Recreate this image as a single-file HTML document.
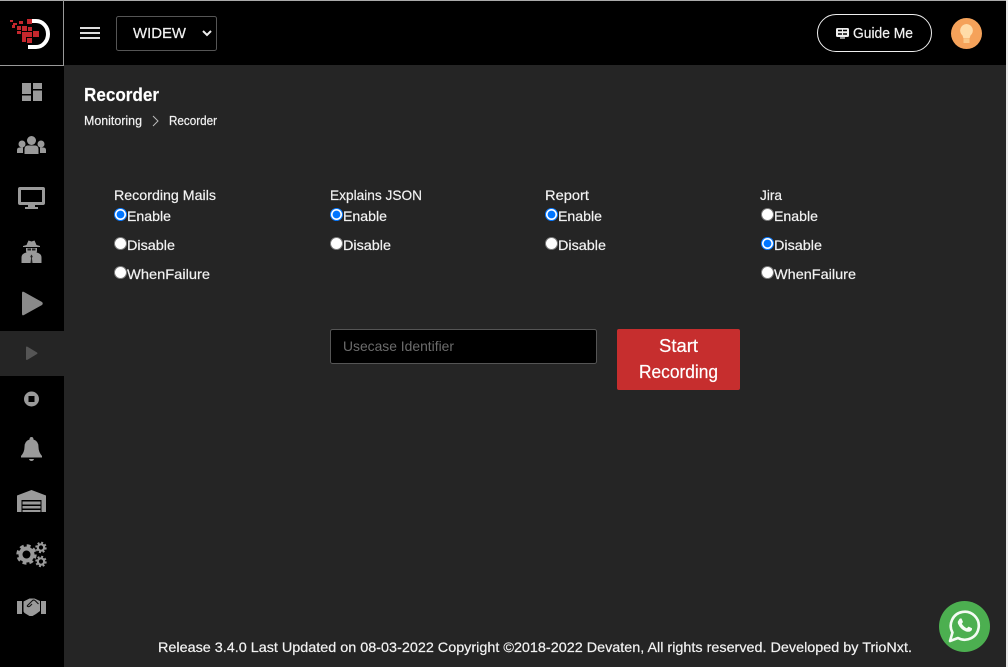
<!DOCTYPE html>
<html><head><meta charset="utf-8"><title>Recorder</title>
<style>
html,body{margin:0;padding:0;background:#252525;width:1008px;height:667px;overflow:hidden}
body{position:relative;font-family:"Liberation Sans",sans-serif}
.a{position:absolute}
input[type=radio]{position:absolute;margin:0;width:13px;height:13px}
svg{position:absolute;left:0;top:0}
text{font-family:"Liberation Sans",sans-serif;fill:#f2f2f2;stroke:#f2f2f2;stroke-width:.2}
</style></head><body>
<div class="a" style="left:0;top:0;width:1008px;height:65px;background:#000"></div>
<div class="a" style="left:0;top:65px;width:64px;height:602px;background:#000"></div>
<div class="a" style="left:0;top:331px;width:64px;height:45px;background:#252525"></div>
<div class="a" style="left:0;top:0;width:1008px;height:1px;background:#aaa"></div>
<div class="a" style="left:63px;top:0;width:1px;height:66px;background:#999"></div>
<div class="a" style="left:0;top:65px;width:64px;height:1px;background:#999"></div>
<div class="a" style="left:1006px;top:0;width:2px;height:667px;background:#e8e8e8"></div>

<svg width="1008" height="667" viewBox="0 0 1008 667">
<!-- logo -->
<path d="M30 21h6a12 13 0 0 1 0 26h-8" fill="none" stroke="#fff" stroke-width="4"/>
<g fill="#c5272d">
<rect x="27" y="19" width="5" height="5"/><rect x="19" y="21" width="4" height="3"/><rect x="13" y="23" width="4" height="2"/><rect x="10" y="20" width="3" height="2"/>
<rect x="12" y="25" width="3" height="3"/><rect x="17" y="26" width="4" height="4"/><rect x="22" y="26" width="5" height="5"/><rect x="28" y="27" width="4" height="4"/>
<rect x="17" y="31" width="4" height="3"/><rect x="22" y="32" width="5" height="5"/><rect x="27" y="32" width="5" height="5"/><rect x="33" y="31" width="6" height="6"/>
<rect x="22" y="37" width="4" height="5"/><rect x="27" y="38" width="5" height="5"/>
</g>
<!-- hamburger -->
<rect x="80" y="27" width="20" height="2" fill="#dcdcdc"/><rect x="80" y="32" width="20" height="2" fill="#dcdcdc"/><rect x="80" y="37" width="20" height="2" fill="#dcdcdc"/>
<!-- select -->
<rect x="116.500" y="16.500" width="100" height="34" rx="2" fill="#000" stroke="#555"/>
<text x="133" y="38" font-size="15" textLength="53" lengthAdjust="spacingAndGlyphs">WIDEW</text>
<path d="M203 31l4 4 4-4" fill="none" stroke="#eee" stroke-width="2"/>
<!-- guide me -->
<rect x="817.500" y="14.500" width="114" height="37" rx="18.500" fill="#000" stroke="#eee"/>
<rect x="836" y="28" width="13" height="9" rx="1.500" fill="#eee"/>
<path d="M838 30.500h4M843 30.500h4M838 34h4M843 34h4" stroke="#000" stroke-width="1.500"/>
<path d="M840 38h5" stroke="#eee" stroke-width="1.200"/>
<text x="853" y="38" font-size="14.500" textLength="60" lengthAdjust="spacingAndGlyphs">Guide Me</text>
<!-- avatar -->
<circle cx="966.500" cy="33.500" r="15.500" fill="#f5a25a"/>
<path d="M966.500 24a6.500 6.500 0 0 0-4 11.500l1 3h6l1-3a6.500 6.500 0 0 0-4-11.500z" fill="#ffdca8"/>
<rect x="963.500" y="39" width="6" height="4" fill="#fbc98a"/>

<!-- sidebar icons -->
<g fill="#9a9a9a">
<path d="M22 83h9v11h-9zM33 83h9v6h-9zM22 95.500h9v5.500h-9zM33 90.500h9v10.500h-9z"/>
<circle cx="31.500" cy="140.500" r="4.500"/><circle cx="22" cy="144" r="3.500"/><circle cx="41" cy="144" r="3.500"/>
<path d="M24.500 154v-5q0-3 3-3.500h8q3 .5 3 3.500v5zM17 153v-3q0-2.500 3-2.500h3v5.500zM46 153v-3q0-2.500-3-2.500h-3v5.500z"/>
<path fill-rule="evenodd" d="M20 187h23q2 0 2 2v14q0 2-2 2h-8v2h3v2H25v-2h3v-2h-8q-2 0-2-2v-14q0-2 2-2zm1 3v12h21v-12z"/>
<!-- spy -->
<path d="M26.500 245l2-4.500 3 1 3-1 2 4.500 3.500 1v1H23v-1z"/>
<path d="M26 248h11v2.500q0 2.500-2 4h-7q-2-1.500-2-4z"/>
<path d="M21.500 263v-5.500q0-4 5-5h10q5 1 5 5v5.500z"/>
<path d="M27.500 248.500h3.500v2h-3.500zM32 248.500h3.500v2H32z" fill="#222"/>
<path d="M31.500 254.500l-1.200 2 .8 1.500-.6 5h2l-.6-5 .8-1.500z" fill="#222"/>
<!-- play -->
<path d="M22 293q0-2 2-1l18 10q1.500 1.500 0 3l-18 10q-2 1-2-1z" fill="#8a8a8a"/>
<path d="M26 347.500q0-1.500 1.500-.8l9.500 5.800q1 .8 0 1.500l-9.500 5.800q-1.500.7-1.500-.8z" fill="#555"/>
<path fill-rule="evenodd" d="M31.500 391.500a7.500 7.500 0 1 0 0 15 7.500 7.500 0 0 0 0-15zm-3 4.500h6v6h-6z"/>
<path d="M31.500 437q2 0 2 2.500 5 1.500 5 7.500 0 5 3.500 9v1.500H21V456q3.500-4 3.500-9 0-6 5-7.500 0-2.500 2-2.500zM29 459h5q-.5 2-2.500 2t-2.500-2z"/>
<!-- warehouse -->
<path d="M31.500 490l14.500 5.500V512H17v-16.500zM21.500 500v12h20v-12z" fill-rule="evenodd"/>
<path d="M22.500 501.500h18v3h-18zM22.500 506h18v2.500h-18zM22.500 510h18v2h-18z"/>
</g>
<!-- gears -->
<g fill="none" stroke="#9a9a9a">
<circle cx="26.500" cy="554.500" r="6" stroke-width="4"/>
<circle cx="26.500" cy="554.500" r="8.800" stroke-width="2.800" stroke-dasharray="3.900 3"/>
<circle cx="41" cy="547.500" r="3.200" stroke-width="2.200"/>
<circle cx="41" cy="547.500" r="4.800" stroke-width="1.800" stroke-dasharray="2 1.770"/>
<circle cx="41" cy="561.500" r="3.200" stroke-width="2.200"/>
<circle cx="41" cy="561.500" r="4.800" stroke-width="1.800" stroke-dasharray="2 1.770"/>
</g>
<!-- handshake -->
<g fill="#9a9a9a">
<path d="M17 601h5v13h-5zM41 601h5v13h-5z"/>
<path d="M23.500 601.500l6-3h5l5.500 2.500v10l-4 3-3.500 2h-3l-5-3-1-1.500z"/>
<path d="M27 606l5.500-5.500q1.500-1 3 .5l3 3" fill="none" stroke="#111" stroke-width="1.100"/>
<path d="M27 606q1.500 1.500 3 0l2-2" fill="none" stroke="#111" stroke-width="1.100"/>
</g>

<!-- content text -->
<text x="84" y="101" font-size="18" font-weight="700" style="fill:#fff" textLength="75" lengthAdjust="spacingAndGlyphs">Recorder</text>
<text x="84" y="125" font-size="12.500" textLength="58" lengthAdjust="spacingAndGlyphs">Monitoring</text>
<path d="M153 116l5 5-5 5" fill="none" stroke="#bbb" stroke-width="1"/>
<text x="169" y="125" font-size="12.500" textLength="48" lengthAdjust="spacingAndGlyphs">Recorder</text>

<g font-size="14">
<text x="114" y="200" textLength="102" lengthAdjust="spacingAndGlyphs">Recording Mails</text>
<text x="127" y="221" textLength="44" lengthAdjust="spacingAndGlyphs">Enable</text>
<text x="127" y="250" textLength="48" lengthAdjust="spacingAndGlyphs">Disable</text>
<text x="127" y="279" textLength="83" lengthAdjust="spacingAndGlyphs">WhenFailure</text>

<text x="330" y="200" textLength="92" lengthAdjust="spacingAndGlyphs">Explains JSON</text>
<text x="343" y="221" textLength="44" lengthAdjust="spacingAndGlyphs">Enable</text>
<text x="343" y="250" textLength="48" lengthAdjust="spacingAndGlyphs">Disable</text>

<text x="545" y="200" textLength="44" lengthAdjust="spacingAndGlyphs">Report</text>
<text x="558" y="221" textLength="44" lengthAdjust="spacingAndGlyphs">Enable</text>
<text x="558" y="250" textLength="48" lengthAdjust="spacingAndGlyphs">Disable</text>

<text x="760" y="200" textLength="22" lengthAdjust="spacingAndGlyphs">Jira</text>
<text x="774" y="221" textLength="44" lengthAdjust="spacingAndGlyphs">Enable</text>
<text x="774" y="250" textLength="48" lengthAdjust="spacingAndGlyphs">Disable</text>
<text x="774" y="279" textLength="82" lengthAdjust="spacingAndGlyphs">WhenFailure</text>
</g>

<!-- input + button -->
<rect x="330.500" y="329.500" width="266" height="34" rx="2" fill="#000" stroke="#555"/>
<text x="343" y="351" font-size="14" style="fill:#6c6c6c;stroke:none" textLength="111" lengthAdjust="spacingAndGlyphs">Usecase Identifier</text>
<rect x="617" y="329" width="123" height="61" rx="2" fill="#c62e2e"/>
<text x="659" y="352" font-size="18" style="fill:#fff;stroke:#fff" textLength="39" lengthAdjust="spacingAndGlyphs">Start</text>
<text x="639" y="378" font-size="18" style="fill:#fff;stroke:#fff" textLength="79" lengthAdjust="spacingAndGlyphs">Recording</text>

<text x="158" y="652" font-size="14" textLength="754" lengthAdjust="spacingAndGlyphs">Release 3.4.0 Last Updated on 08-03-2022 Copyright ©2018-2022 Devaten, All rights reserved. Developed by TrioNxt.</text>

<!-- whatsapp -->
<circle cx="964.500" cy="626.500" r="25.500" fill="#4caf50"/>
<path d="M950 641l2.500-8.500a14 14 0 1 1 5.500 5.500z" fill="none" stroke="#f4fbf4" stroke-width="2.600" stroke-linejoin="round"/>
<path d="M959 619.500q1-1.500 2.500-1l1.500 3.500-1.200 1.800q2 3.200 5 4.500l1.800-1.700 3.400 1.600q.3 2-1.500 3-2 1.200-5 0-5-2-7.500-7.500-.8-2.400 1-3.700z" fill="#f4fbf4"/>
</svg>

<input type="radio" name="a" checked style="left:114px;top:208px">
<input type="radio" name="a" style="left:114px;top:237px">
<input type="radio" name="a" style="left:114px;top:266px">
<input type="radio" name="b" checked style="left:330px;top:208px">
<input type="radio" name="b" style="left:330px;top:237px">
<input type="radio" name="c" checked style="left:545px;top:208px">
<input type="radio" name="c" style="left:545px;top:237px">
<input type="radio" name="d" style="left:761px;top:208px">
<input type="radio" name="d" checked style="left:761px;top:237px">
<input type="radio" name="d" style="left:761px;top:266px">
</body></html>
